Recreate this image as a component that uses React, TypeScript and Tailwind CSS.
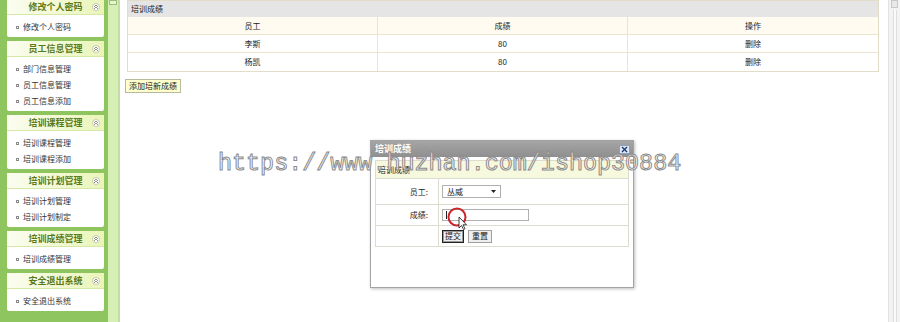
import React from 'react';

type Menu = { title: string; items: string[] };

const menus: Menu[] = [
  { title: '修改个人密码', items: ['修改个人密码'] },
  { title: '员工信息管理', items: ['部门信息管理', '员工信息管理', '员工信息添加'] },
  { title: '培训课程管理', items: ['培训课程管理', '培训课程添加'] },
  { title: '培训计划管理', items: ['培训计划管理', '培训计划制定'] },
  { title: '培训成绩管理', items: ['培训成绩管理'] },
  { title: '安全退出系统', items: ['安全退出系统'] },
];

const rows = [
  { name: '李斯', score: '80' },
  { name: '杨凯', score: '80' },
];

function Collapse() {
  return (
    <span className="absolute right-[4px] top-[4px] flex h-[8px] w-[8px] items-center justify-center rounded-full border border-[#c9c9b0] bg-white">
      <svg width="6" height="6" viewBox="0 0 6 6">
        <path d="M1 3 L3 1 L5 3 M1 5 L3 3 L5 5" fill="none" stroke="#8a8a70" strokeWidth="0.9" />
      </svg>
    </span>
  );
}

function Sidebar() {
  return (
    <aside className="flex w-[108px] flex-col gap-[4px] bg-[#8fc55f] pl-[7px] pr-[4px]">
      {menus.map((m, i) => (
        <div key={m.title} className={`rounded-[2px] bg-white ${i === 0 ? '-mt-[1px]' : ''}`}>
          <div className="relative flex h-[16px] items-center justify-center border-b border-[#d6e8a8] bg-gradient-to-r from-[#fbfdf0] to-[#eaf5b8] text-[9px] font-semibold text-[#5a7a1a]">
            {m.title}
            <Collapse />
          </div>
          <div className="pb-[2px] pt-[4px]">
            {m.items.map((it) => (
              <div key={it} className="flex h-[16px] items-center gap-[4px] pl-[9px] text-[8px] text-[#333]">
                <span className="h-[3px] w-[3px] border border-[#8a8a8a]" />
                {it}
              </div>
            ))}
          </div>
        </div>
      ))}
    </aside>
  );
}

function Dialog() {
  return (
    <div className="absolute left-[370px] top-[140px] flex h-[148px] w-[264px] flex-col border border-[#a3a3a3] bg-white shadow-[1px_1px_3px_rgba(0,0,0,0.25)]">
      <div className="flex h-[16px] items-center justify-between bg-gradient-to-b from-[#a5a5a5] to-[#8f8f8f] pl-[4px] pr-[3px]">
        <span className="text-[9px] font-bold text-white">培训成绩</span>
        <span className="flex h-[9px] w-[11px] items-center justify-center border border-[#8fa0bb] bg-[#dbe5f3]">
          <svg width="7" height="7" viewBox="0 0 7 7">
            <path d="M1 1 L6 6 M6 1 L1 6" stroke="#1f3b73" strokeWidth="1.4" />
          </svg>
        </span>
      </div>
      <div className="mx-[4px] mt-[3px] border border-[#dcdcd0] text-[8px] text-[#222]">
        <div className="flex h-[18px] items-center border-b border-[#dcdcd0] bg-[#f7f9df] px-[2px]">培训成绩</div>
        <div className="grid grid-cols-[63px_1fr]">
          <div className="flex h-[26px] items-center justify-end border-b border-r border-[#dcdcd0] pr-[10px]">员工:</div>
          <div className="flex h-[26px] items-center border-b border-[#dcdcd0] pl-[3px]">
            <div className="flex h-[13px] w-[59px] items-center justify-between border border-[#b0b0b0] bg-white pl-[4px] pr-[4px]">
              <span>丛威</span>
              <svg width="5" height="3" viewBox="0 0 5 3">
                <path d="M0 0 L5 0 L2.5 3 Z" fill="#222" />
              </svg>
            </div>
          </div>
          <div className="flex h-[21px] items-center justify-end border-b border-r border-[#dcdcd0] pr-[10px]">成绩:</div>
          <div className="flex h-[21px] items-center border-b border-[#dcdcd0] pl-[3px]">
            <div className="flex h-[12px] w-[87px] items-center border border-[#b0b0b0] bg-white pl-[3px]">
              <span className="h-[8px] w-[1px] bg-[#222]" />
            </div>
          </div>
          <div className="h-[20px] border-r border-[#dcdcd0]" />
          <div className="flex h-[20px] items-center gap-[4px] pl-[3px]">
            <button className="flex h-[13px] items-center border border-[#222] bg-[#efefef] px-[2px] text-[8px] leading-none outline outline-1 -outline-offset-2 outline-[#999]">
              提交
            </button>
            <button className="flex h-[13px] items-center border border-[#a0a0a0] bg-[#efefef] px-[3px] text-[8px] leading-none">
              重置
            </button>
          </div>
        </div>
      </div>
    </div>
  );
}

export default function App() {
  return (
    <div
      className="relative flex h-[322px] w-[900px] overflow-hidden bg-white"
      style={{ fontFamily: '"Noto Sans CJK SC", "Noto Sans", sans-serif' }}
    >
      <Sidebar />
      <div className="flex w-[12px] flex-col border-r-[2px] border-[#c4dca6] bg-[#d6efb4]">
        <div className="mx-[1px] h-[5px] border border-[#9cbf78] bg-[#e6f5cf]" />
      </div>
      <main className="flex-1 pl-[7px] pr-[9px]">
        <div className="border border-[#e2ddc8]">
          <div className="flex h-[16px] items-center bg-[#e5e5e5] px-[3px] text-[8px] text-[#222]">培训成绩</div>
          <div className="grid grid-cols-3 text-[8px] text-[#222]">
            {['员工', '成绩', '操作'].map((h, i) => (
              <div
                key={h}
                className={`flex h-[18px] items-center justify-center border-b border-[#ebe5d0] bg-[#fffbf1] ${i < 2 ? 'border-r' : ''}`}
              >
                {h}
              </div>
            ))}
            {rows.map((r, idx) => (
              <React.Fragment key={r.name}>
                <div className={`flex h-[18px] items-center justify-center border-r border-[#ebe5d0] ${idx === 0 ? 'border-b' : ''}`}>{r.name}</div>
                <div className={`flex h-[18px] items-center justify-center border-r border-[#ebe5d0] ${idx === 0 ? 'border-b' : ''}`}>{r.score}</div>
                <div className={`flex h-[18px] items-center justify-center border-[#ebe5d0] ${idx === 0 ? 'border-b' : ''}`}>删除</div>
              </React.Fragment>
            ))}
          </div>
        </div>
        <button className="-ml-[2px] mt-[7px] flex h-[14px] items-center border border-[#b9b9a0] bg-[#ffffcc] px-[3px] text-[8px] leading-none text-[#222]">
          添加培新成绩
        </button>
      </main>
      <div className="flex w-[12px] flex-col border-l border-[#e2e2e2] bg-[#f3f3f3]">
        <div className="mx-[2px] h-[8px] border border-[#c8c8c8] bg-[#e9e9e9]" />
        <div className="mx-auto mt-[2px] w-[4px] flex-1 border-x border-[#dedede] bg-[#fafafa]" />
      </div>
      <Dialog />
      <div
        className="pointer-events-none absolute left-[218px] top-[153px] whitespace-nowrap text-[23.4px] leading-none text-white/70 [-webkit-text-stroke:1px_#8c8c8c]"
        style={{ fontFamily: '"Liberation Mono", monospace' }}
      >
        https://www.huzhan.com/ishop30884
      </div>
      <svg className="pointer-events-none absolute left-[446px] top-[206px]" width="26" height="26" viewBox="0 0 26 26">
        <circle cx="11" cy="11" r="8.5" fill="none" stroke="#c9252b" strokeWidth="2" />
        <path d="M13 11 L13 22 L15.5 19.5 L17.5 23.5 L19 22.8 L17 18.8 L20.5 18.8 Z" fill="#fff" stroke="#111" strokeWidth="0.8" />
      </svg>
    </div>
  );
}
